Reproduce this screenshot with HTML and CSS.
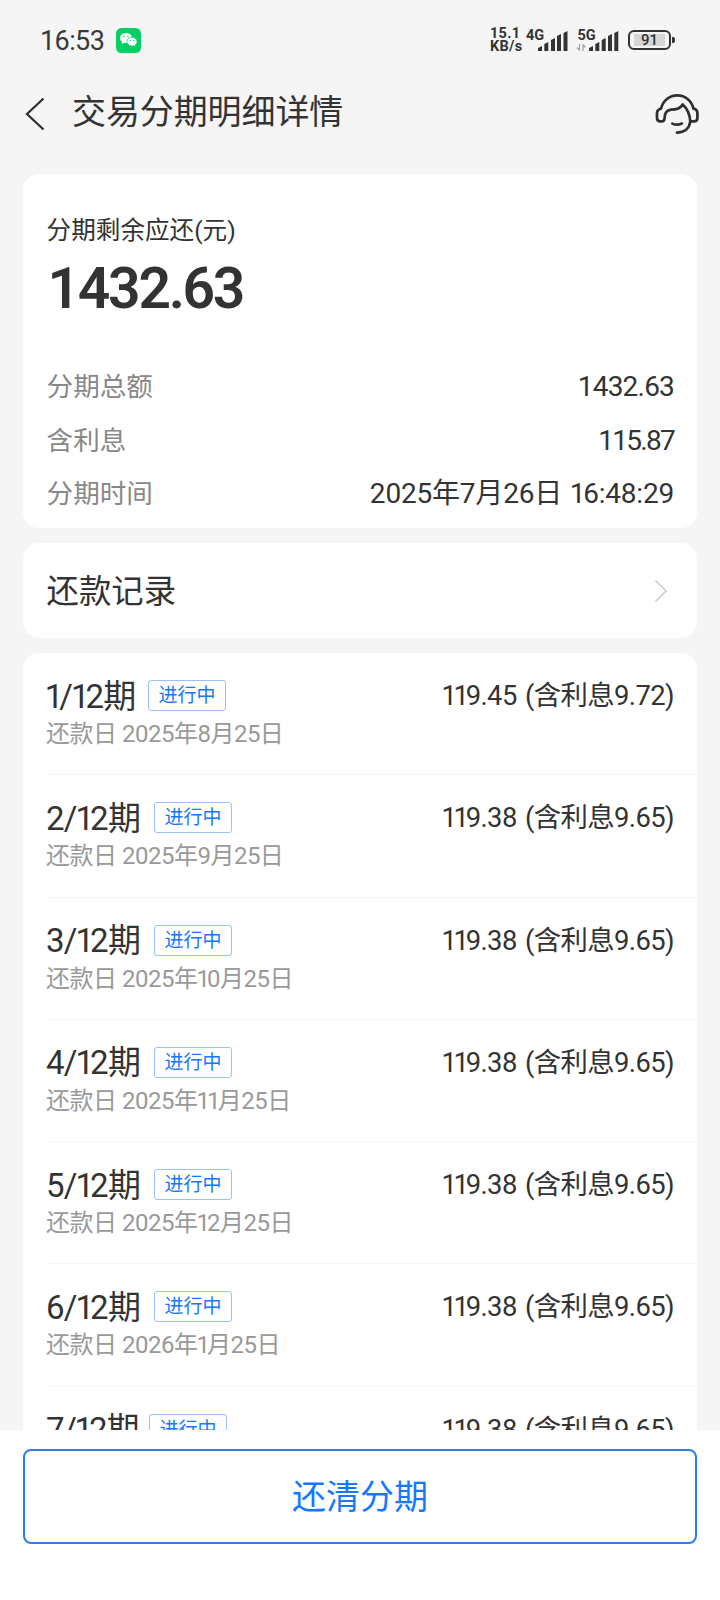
FILE: index.html
```html
<!DOCTYPE html>
<html lang="zh-CN">
<head>
  <meta charset="UTF-8" />
  <meta name="viewport" content="width=device-width, initial-scale=1" />
  <title>交易分期明细详情</title>
  <link rel="stylesheet" href="styles.css">
</head>
<body>
  <div class="statusbar">
    <span class="time">16:53</span>
    <svg class="wechat" width="25" height="25" viewBox="0 0 25 25">
      <rect width="25" height="25" rx="5.5" fill="#06d065"/>
      <path d="M10 5C6.600 5 4 7.200 4 10c0 1.600.8 2.900 2.100 3.800L5.600 16l2.300-1.200c.7.200 1.400.3 2.100.3 3.400 0 6-2.300 6-5.100S13.400 5 10 5z" fill="#fff"/>
      <path d="M16 9.300c-2.900 0-5.100 1.900-5.100 4.300S13.100 18 16 18c.6 0 1.200-.1 1.700-.2l1.800.9-.4-1.700c1.200-.8 1.900-2 1.900-3.400 0-2.400-2.200-4.300-5-4.300z" fill="#fff" stroke="#06d065" stroke-width=".7"/>
      <g fill="#06d065"><circle cx="8" cy="8.500" r=".8"/><circle cx="12" cy="8.500" r=".8"/><circle cx="14.300" cy="12.400" r=".7"/><circle cx="17.700" cy="12.400" r=".7"/></g>
    </svg>
    <div class="speed"><span>15.1</span><span>KB/s</span></div>
    <svg class="signal" width="43" height="24" viewBox="0 0 43 24">
      <text x="0" y="11.500">4G</text>
      <path d="M12 23v-3l4-2v5zM18.300 23v-7l4-2v9zM25 23V12l4-2v13zM31 23V8l4-2v17zM37.500 23V5l4-2v20z"/>
    </svg>
    <svg class="signal signal-5g" width="43" height="24" viewBox="0 0 43 24">
      <text x="1.500" y="11.500">5G</text>
      <path class="arrows" d="M3.500 16v6.500M3.500 22.500L1 19.500M7 23v-6.500M7 16.500l2.500 3"/>
      <path d="M13 23v-3l4-2v5zM19.300 23v-7l4-2v9zM25.700 23V12l4-2v13zM32 23V8l4-2v17zM38.300 23V5l4-2v20z"/>
    </svg>
    <div class="battery"><span>91</span></div>
  </div>

  <header>
    <svg class="back" width="20" height="34" viewBox="0 0 20 34">
      <path d="M18.500 1.500L2 17l16.500 15.500" fill="none" stroke="#2b2e30" stroke-width="2.200"/>
    </svg>
    <h1>交易分期明细详情</h1>
    <svg class="service" width="45" height="42" viewBox="0 0 45 42">
      <g fill="none" stroke="#2d3032" stroke-width="2.700" stroke-linecap="round" stroke-linejoin="round">
        <path d="M6 15.500C8 7.500 14.500 2.400 22.300 2.400S36.500 7.500 38.500 15.500"/>
        <path d="M6 15.500C3 16.500 2 18 2 20v5q0 3.400 3.300 3.400h1.400Q9.600 28.400 9.600 25C9.600 19.500 12 17.200 16 16.700c5 0 9-.7 11.700-5.200 4.500 4 7 8.500 7.600 16.900H39q3.400 0 3.400-3.400v-5c0-2.500-1.400-3.900-3.900-4.500"/>
        <path d="M35.300 28.400c-.8 6.800-5.800 11-13.300 11.200"/>
        <path d="M17.300 30.600q4.700 2.200 9.600 0"/>
      </g>
    </svg>
  </header>

  <main>
    <section class="card summary">
      <div class="label">分期剩余应还(元)</div>
      <div class="total">1432.63</div>
      <div class="line"><span>分期总额</span><b>1432.63</b></div>
      <div class="line"><span>含利息</span><b class="narrow">115.87</b></div>
      <div class="line"><span>分期时间</span><b class="date">2025年7月26日 <i>1</i>6:48:29</b></div>
    </section>

    <section class="card record">
      <span>还款记录</span>
      <svg width="14" height="24" viewBox="0 0 14 24">
        <path d="M1.500 1.500L12 12 1.500 22.500" fill="none" stroke="#ccc" stroke-width="1.600"/>
      </svg>
    </section>

    <section class="card lista">
      <div class="item">
        <div class="fila"><span class="term term-1"><i>1</i>/<i>1</i>2期</span><span class="tag">进行中</span><span class="amount"><b><i>11</i>9.45</b> (含利息9.72)</span></div>
        <div class="due">还款日 2025年8月25日</div>
      </div>
      <div class="item">
        <div class="fila"><span class="term">2/<i>1</i>2期</span><span class="tag">进行中</span><span class="amount"><b><i>11</i>9.38</b> (含利息9.65)</span></div>
        <div class="due">还款日 2025年9月25日</div>
      </div>
      <div class="item">
        <div class="fila"><span class="term">3/<i>1</i>2期</span><span class="tag">进行中</span><span class="amount"><b><i>11</i>9.38</b> (含利息9.65)</span></div>
        <div class="due">还款日 2025年<i>1</i>0月25日</div>
      </div>
      <div class="item">
        <div class="fila"><span class="term">4/<i>1</i>2期</span><span class="tag">进行中</span><span class="amount"><b><i>11</i>9.38</b> (含利息9.65)</span></div>
        <div class="due">还款日 2025年<i>11</i>月25日</div>
      </div>
      <div class="item">
        <div class="fila"><span class="term">5/<i>1</i>2期</span><span class="tag">进行中</span><span class="amount"><b><i>11</i>9.38</b> (含利息9.65)</span></div>
        <div class="due">还款日 2025年<i>1</i>2月25日</div>
      </div>
      <div class="item">
        <div class="fila"><span class="term">6/<i>1</i>2期</span><span class="tag">进行中</span><span class="amount"><b><i>11</i>9.38</b> (含利息9.65)</span></div>
        <div class="due">还款日 2026年<i>1</i>月25日</div>
      </div>
      <div class="item">
        <div class="fila"><span class="term term-7">7/<i>1</i>2期</span><span class="tag">进行中</span><span class="amount"><b><i>11</i>9.38</b> (含利息9.65)</span></div>
        <div class="due">还款日 2026年2月25日</div>
      </div>
    </section>
  </main>

  <footer>
    <button type="button">还清分期</button>
  </footer>
</body>
</html>
```
FILE: styles.css
```css
* {
  box-sizing: border-box;
}
body {
  font-family: Roboto, "Noto Sans CJK SC", sans-serif;
  margin: 0;
  height: 1600px;
  display: flex;
  flex-direction: column;
  overflow: hidden;
  background: #f5f5f5;
  color: #333;
}
/* the digit 1 is set narrower than the others */
i {
  font-style: normal;
  margin-left: -0.04em;
  letter-spacing: -0.12em;
}

/* status bar */
.statusbar {
  display: flex;
  align-items: center;
  flex: none;
  height: 80px;
  padding: 0 45px 0 40px;
}
.time {
  width: 76px;
  padding-top: 1px;
  font-size: 27px;
  letter-spacing: -0.6px;
  color: #3a3a3a;
}
.speed {
  display: flex;
  flex-direction: column;
  width: 36px;
  margin-left: auto;
  font-size: 14.5px;
  font-weight: bold;
  line-height: 13px;
  letter-spacing: 0.3px;
  color: #333;
}
.signal {
  margin-right: 7px;
  fill: #333;
  font-size: 14.5px;
  font-weight: bold;
}
.signal-5g {
  margin-right: 9px;
}
.signal .arrows {
  fill: none;
  stroke: #aaa;
  stroke-width: 1.4;
}
.battery {
  position: relative;
  width: 43px;
  height: 20px;
  margin-right: 4px;
  padding: 2px 4px;
  border: 2px solid #333;
  border-radius: 6px;
  font-size: 15px;
  font-weight: 500;
  line-height: 13px;
  text-align: center;
}
.battery span {
  display: block;
  height: 12px;
  background: #d6d6d6;
}
.battery::after {
  content: "";
  position: absolute;
  right: -6px;
  top: 5px;
  width: 3px;
  height: 6px;
  border-radius: 0 2px 2px 0;
  background: #333;
}

header {
  display: flex;
  align-items: center;
  flex: none;
  height: 68px;
  padding: 0 20px 0 25px;
}
h1 {
  flex: 1;
  margin: 0 0 0 27px;
  padding-bottom: 4px;
  font-size: 34px;
  font-weight: normal;
  line-height: 60px;
  letter-spacing: -0.1px;
}

/* cards */
main {
  flex: 1;
  min-height: 0;
  overflow: hidden;
  padding: 26px 23px 0;
}
.card {
  background: #fff;
  border-radius: 16px;
  padding: 0 23px 0 23.6px;
  margin-bottom: 15px;
}
.summary {
  height: 354px;
  padding-top: 37px;
}
.label {
  font-size: 24.6px;
  line-height: 40px;
}
.total {
  height: 109px;
  padding-left: 1px;
  font-size: 57px;
  font-weight: 600;
  line-height: 76px;
  letter-spacing: -2.3px;
}
.line {
  display: flex;
  justify-content: space-between;
  height: 53.5px;
  line-height: 53.5px;
  font-size: 26.6px;
}
.line span {
  color: #888;
}
.line b {
  font-weight: normal;
  font-size: 28px;
  letter-spacing: -0.8px;
}
.line .narrow {
  letter-spacing: -1.7px;
}
.line .date {
  letter-spacing: -0.2px;
  word-spacing: 2px;
}
.line .date i {
  letter-spacing: -0.08em;
}
.record {
  display: flex;
  align-items: center;
  justify-content: space-between;
  height: 95px;
  padding-right: 29px;
  font-size: 32.4px;
}
.record span {
  line-height: 60px;
  padding-top: 2px;
}

/* installments */
.lista {
  padding-right: 0;
  padding-left: 23px;
}
.item {
  height: 122.3px;
  padding: 20px 23px 0 0;
  border-bottom: 1px solid #f6f6f6;
}
.fila {
  display: flex;
  align-items: center;
  height: 45px;
}
.term {
  width: 108px;
  padding-top: 1px;
  font-size: 33px;
  line-height: 43px;
  letter-spacing: -0.7px;
}
.term-1,
.term-7 {
  width: 102px;
}
.term-7 {
  width: 103px;
  letter-spacing: -1.2px;
}
.tag {
  width: 78px;
  height: 31px;
  border: 1px solid #9dbffa;
  border-radius: 3px;
  color: #1677ff;
  font-size: 19px;
  line-height: 30px;
  text-align: center;
}
.amount {
  margin-left: auto;
  padding-top: 2px;
  font-size: 27.4px;
  line-height: 43px;
  letter-spacing: -0.6px;
  word-spacing: 2px;
}
.amount b {
  font-weight: normal;
}
.due {
  font-size: 24px;
  line-height: 33px;
  letter-spacing: -0.5px;
  color: #999;
}

footer {
  flex: none;
  height: 170px;
  padding: 19px 23px 0;
  background: #fff;
}
button {
  width: 100%;
  height: 95px;
  border: 2px solid #2f7de1;
  border-radius: 8px;
  background: #fff;
  color: #1677ff;
  font-family: inherit;
  font-size: 34px;
  padding: 0 0 5px;
}
```
